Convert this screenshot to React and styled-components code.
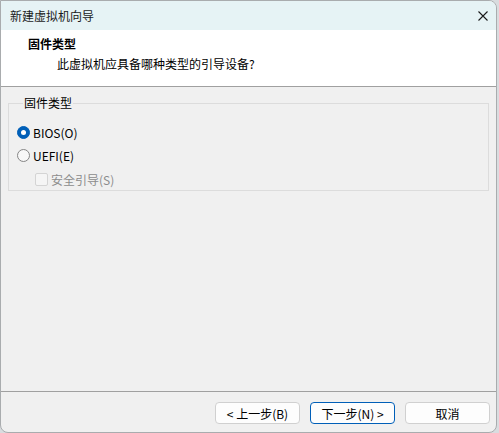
import React, { useState } from 'react'
import styled, { createGlobalStyle } from 'styled-components'

const GlobalStyle = createGlobalStyle`
  html, body {
    margin: 0;
    padding: 0;
    background: #d9dcdf;
  }
  body {
    font-family: "Noto Sans CJK SC", "Noto Sans", sans-serif;
    font-size: 12px;
    color: #000;
  }
`

function App() {
  const [firmware, setFirmware] = useState('bios')

  return (
    <>
      <GlobalStyle />
      <Window>
        <TitleBar>
          <Title>新建虚拟机向导</Title>
          <CloseButton aria-label="close">
            <svg width="10" height="10" viewBox="0 0 10 10">
              <path d="M0.5 0.5 L9.5 9.5 M9.5 0.5 L0.5 9.5" stroke="#1a1a1a" strokeWidth="1.1" fill="none" />
            </svg>
          </CloseButton>
        </TitleBar>
        <Header>
          <HeaderTitle>固件类型</HeaderTitle>
          <HeaderSub>此虚拟机应具备哪种类型的引导设备?</HeaderSub>
        </Header>
        <Body>
          <Group>
            <Legend>固件类型</Legend>
            <Option onClick={() => setFirmware('bios')}>
              <Radio checked={firmware === 'bios'} />
              <span>BIOS(O)</span>
            </Option>
            <Option onClick={() => setFirmware('uefi')}>
              <Radio checked={firmware === 'uefi'} />
              <span>UEFI(E)</span>
            </Option>
            <Option indent disabled={firmware !== 'uefi'}>
              <Check disabled={firmware !== 'uefi'} />
              <span>安全引导(S)</span>
            </Option>
          </Group>
        </Body>
        <Footer>
          <Button>&lt; 上一步(B)</Button>
          <Button focused>下一步(N) &gt;</Button>
          <Button>取消</Button>
        </Footer>
      </Window>
    </>
  )
}

const Window = styled.div`
  box-sizing: border-box;
  width: 497px;
  height: 433px;
  display: flex;
  flex-direction: column;
  background: #f0f0f0;
  border: 1px solid #a9acae;
  border-radius: 0 8px 8px 8px;
  overflow: hidden;
`

const TitleBar = styled.div`
  height: 29px;
  flex-shrink: 0;
  display: flex;
  align-items: center;
  justify-content: space-between;
  background: #e6f3f5;
  padding: 0 8px 0 9px;
`

const Title = styled.div`
  font-size: 12px;
  line-height: 16px;
  color: #1a1a1a;
`

const CloseButton = styled.div`
  width: 10px;
  height: 10px;
  display: flex;
  margin-top: 1px;
`

const Header = styled.div`
  height: 57px;
  flex-shrink: 0;
  box-sizing: border-box;
  background: #fff;
  border-bottom: 1px solid #a0a0a0;
  padding: 6px 0 0 27px;
`

const HeaderTitle = styled.div`
  font-weight: bold;
  line-height: 16px;
`

const HeaderSub = styled.div`
  line-height: 16px;
  margin: 4px 0 0 29px;
`

const Body = styled.div`
  flex: 1;
  padding: 8px 7px 0 7px;
`

const Group = styled.fieldset`
  margin: 0;
  padding: 10px 0 0 8px;
  height: 96px;
  box-sizing: border-box;
  border: 1px solid #dcdcdc;
  display: flex;
  flex-direction: column;
`

const Legend = styled.legend`
  margin-left: 6px;
  padding: 0 1px;
  line-height: 16px;
  font-size: 12px;
`

const Option = styled.label`
  display: flex;
  align-items: center;
  gap: 3px;
  height: 23px;
  flex-shrink: 0;
  margin-top: ${p => (p.indent ? '1px' : '0')};
  padding-left: ${p => (p.indent ? '18px' : '0')};
  color: ${p => (p.disabled ? '#8c8c8c' : '#000')};
  span {
    line-height: 16px;
  }
`

const Radio = styled.span`
  box-sizing: border-box;
  width: 13px;
  height: 13px;
  border-radius: 50%;
  flex-shrink: 0;
  background: ${p => (p.checked ? '#005fb8' : '#f7f7f7')};
  border: 1px solid ${p => (p.checked ? '#005fb8' : '#858585')};
  display: flex;
  align-items: center;
  justify-content: center;
  &::after {
    content: '';
    width: 5px;
    height: 5px;
    border-radius: 50%;
    background: #fff;
    display: ${p => (p.checked ? 'block' : 'none')};
  }
`

const Check = styled.span`
  box-sizing: border-box;
  width: 13px;
  height: 13px;
  flex-shrink: 0;
  border-radius: 2px;
  background: ${p => (p.disabled ? '#f5f5f5' : '#fff')};
  border: 1px solid ${p => (p.disabled ? '#d4d4d4' : '#858585')};
`

const Footer = styled.div`
  height: 41px;
  flex-shrink: 0;
  box-sizing: border-box;
  border-top: 1px solid #a0a0a0;
  display: flex;
  justify-content: flex-end;
  gap: 10px;
  padding: 10px 6px 0 0;
`

const Button = styled.button`
  box-sizing: border-box;
  width: 85px;
  height: 22px;
  padding: 0;
  font-family: inherit;
  font-size: 12px;
  color: #000;
  background: #fdfdfd;
  border: 1px solid ${p => (p.focused ? '#005fb8' : '#d0d0d0')};
  border-radius: 4px;
`

export default App
